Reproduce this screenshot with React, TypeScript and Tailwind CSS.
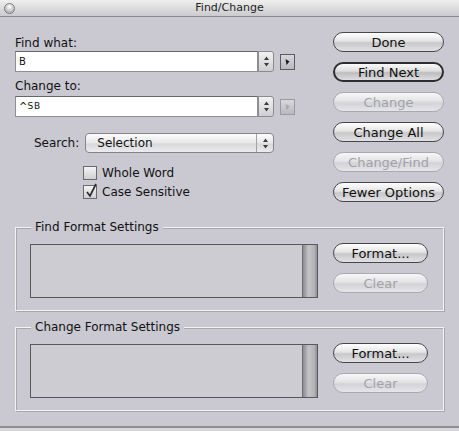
import type { ReactNode } from 'react';

const buttons = [
  { label: 'Done' },
  { label: 'Find Next', primary: true },
  { label: 'Change', disabled: true },
  { label: 'Change All' },
  { label: 'Change/Find', disabled: true },
  { label: 'Fewer Options' },
];

function Pill({
  label,
  disabled,
  primary,
  width,
}: {
  label: string;
  disabled?: boolean;
  primary?: boolean;
  width: string;
}) {
  return (
    <div
      className={`${width} h-[20px] rounded-full flex items-center justify-center text-[13px] leading-none ${
        disabled
          ? 'border border-[#a9a9b0] text-[#a2a2a8] bg-[linear-gradient(#f7f7f8,#e4e4e7_45%,#d3d3d7_55%,#e6e6ea)]'
          : primary
            ? 'border-2 border-[#2d2d30] text-[#111] bg-[linear-gradient(#fbfbfb,#dcdcdc_45%,#bdbdc0_55%,#dedee0)]'
            : 'border border-[#47474b] text-[#111] bg-[linear-gradient(#ffffff,#e4e4e4_45%,#c8c8ca_55%,#e2e2e4)]'
      }`}
    >
      {label}
    </div>
  );
}

function Stepper() {
  return (
    <div className="w-[16px] h-[21px] border border-[#8c8c90] rounded-r-[3px] bg-[linear-gradient(#f2f2f2,#cfcfd2)] flex items-center justify-center">
      <svg width="7" height="11" viewBox="0 0 7 11">
        <path d="M3.5 0.5 L6 4 L1 4 Z" fill="#3c3c40" />
        <path d="M3.5 10.5 L6 7 L1 7 Z" fill="#3c3c40" />
      </svg>
    </div>
  );
}

function ArrowButton({ disabled }: { disabled?: boolean }) {
  return (
    <div
      className={`w-[15px] h-[16px] ml-[6px] border flex items-center justify-center bg-[linear-gradient(#d8d8dc,#b9b9be)] ${
        disabled ? 'border-[#9a9aa0]' : 'border-[#5c5c60]'
      }`}
    >
      <svg width="7" height="8" viewBox="0 0 7 8">
        <path d="M1.5 1 L5.5 3.5 L2.5 7 Z" fill={disabled ? '#a6a6ab' : '#1c1c1c'} />
      </svg>
    </div>
  );
}

function Field({ children, disabledArrow }: { children: ReactNode; disabledArrow?: boolean }) {
  return (
    <div className="flex items-center">
      <div className="w-[243px] h-[21px] bg-white border border-[#8f8f93] border-t-[#66666a] flex items-center pl-[3px] text-[10px] text-[#111]">
        {children}
      </div>
      <Stepper />
      <ArrowButton disabled={disabledArrow} />
    </div>
  );
}

function Checkbox({ label, checked }: { label: string; checked?: boolean }) {
  return (
    <div className="flex items-center h-[19px] ml-[68px]">
      <div className="relative w-[14px] h-[14px] border border-[#6a6a6e] bg-[linear-gradient(#f4f4f4,#cfcfd3)]">
        {checked && (
          <svg className="absolute -top-[3px] left-[1px]" width="13" height="15" viewBox="0 0 13 15">
            <path d="M2 9 L5 13 L11 1" fill="none" stroke="#2a2a2e" strokeWidth="1.7" />
          </svg>
        )}
      </div>
      <span className="ml-[5px] text-[12px] text-[#111]">{label}</span>
    </div>
  );
}

function FormatGroup({ title, top }: { title: string; top: string }) {
  return (
    <fieldset
      className={`${top} mx-[15px] border border-[#f2f2f5] shadow-[inset_1px_1px_0_#a7a7ae,1px_1px_0_#a7a7ae] pl-[14px] pr-[14px] pt-[10px] pb-[12px] flex`}
    >
      <legend className="ml-[1px] px-[4px] text-[12px] leading-[14px] text-[#111] bg-[#cac9d1]">{title}</legend>
      <div className="flex w-full">
        <div className="w-[288px] h-[54px] border border-[#58585c] bg-[#cdccd3] flex justify-end">
          <div className="w-[15px] h-full border-l border-[#6e6e72] bg-[linear-gradient(90deg,#8c8c90,#c4c4c8_40%,#b4b4b8_80%,#909094)]" />
        </div>
        <div className="ml-[15px] flex flex-col gap-[10px] -mt-[1px]">
          <Pill label="Format..." width="w-[95px]" />
          <Pill label="Clear" width="w-[95px]" disabled />
        </div>
      </div>
    </fieldset>
  );
}

export default function App() {
  return (
    <div className="w-[459px] h-[431px] bg-[#d6d6d8] font-['DejaVu_Sans',sans-serif] overflow-hidden">
      <div className="h-[428px] bg-[#cac9d1] border-b-2 border-[#8d8d92]">
        {/* Title bar */}
        <div className="relative h-[17px] bg-[linear-gradient(#efefef,#d9d9db_60%,#cbcbcd)] border-b border-[#8a8a8e] flex items-center justify-center">
          <div className="absolute left-[4px] top-[3px] w-[11px] h-[11px] rounded-full border border-[#7c7c80] bg-[radial-gradient(circle_at_50%_30%,#ffffff,#b8b8bc_70%)]" />
          <span className="text-[11px] text-[#222]">Find/Change</span>
        </div>

        {/* Top section */}
        <div className="flex items-start px-[15px]">
          <div className="w-[280px] pt-[19px]">
            <div className="text-[12px] leading-[14px] text-[#111]">Find what:</div>
            <div className="mt-[1px]">
              <Field>B</Field>
            </div>
            <div className="mt-[7px] text-[12px] leading-[14px] text-[#111]">Change to:</div>
            <div className="mt-[3px]">
              <Field disabledArrow>
                <span>^</span>
                <span className="tracking-[1px] text-[9px]">SB</span>
              </Field>
            </div>
            <div className="mt-[16px] flex items-center">
              <span className="ml-[19px] text-[12px] text-[#111]">Search:</span>
              <div className="ml-[6px] w-[189px] h-[20px] rounded-[4px] border border-[#858589] bg-[linear-gradient(#fdfdfd,#e7e7e9_50%,#d8d8db_55%,#ececee)] flex items-center">
                <span className="flex-1 pl-[11px] text-[12px] text-[#111]">Selection</span>
                <div className="w-[17px] h-full border-l border-[#a2a2a6] flex items-center justify-center">
                  <svg width="7" height="11" viewBox="0 0 7 11">
                    <path d="M3.5 0.5 L6 4 L1 4 Z" fill="#3c3c40" />
                    <path d="M3.5 10.5 L6 7 L1 7 Z" fill="#3c3c40" />
                  </svg>
                </div>
              </div>
            </div>
            <div className="mt-[10px]">
              <Checkbox label="Whole Word" />
              <Checkbox label="Case Sensitive" checked />
            </div>
          </div>
          <div className="ml-auto pt-[15px] flex flex-col gap-[10px]">
            {buttons.map((b) => (
              <Pill key={b.label} label={b.label} disabled={b.disabled} primary={b.primary} width="w-[111px]" />
            ))}
          </div>
        </div>

        <FormatGroup title="Find Format Settings" top="mt-[18px]" />
        <FormatGroup title="Change Format Settings" top="mt-[9px]" />
      </div>
    </div>
  );
}
